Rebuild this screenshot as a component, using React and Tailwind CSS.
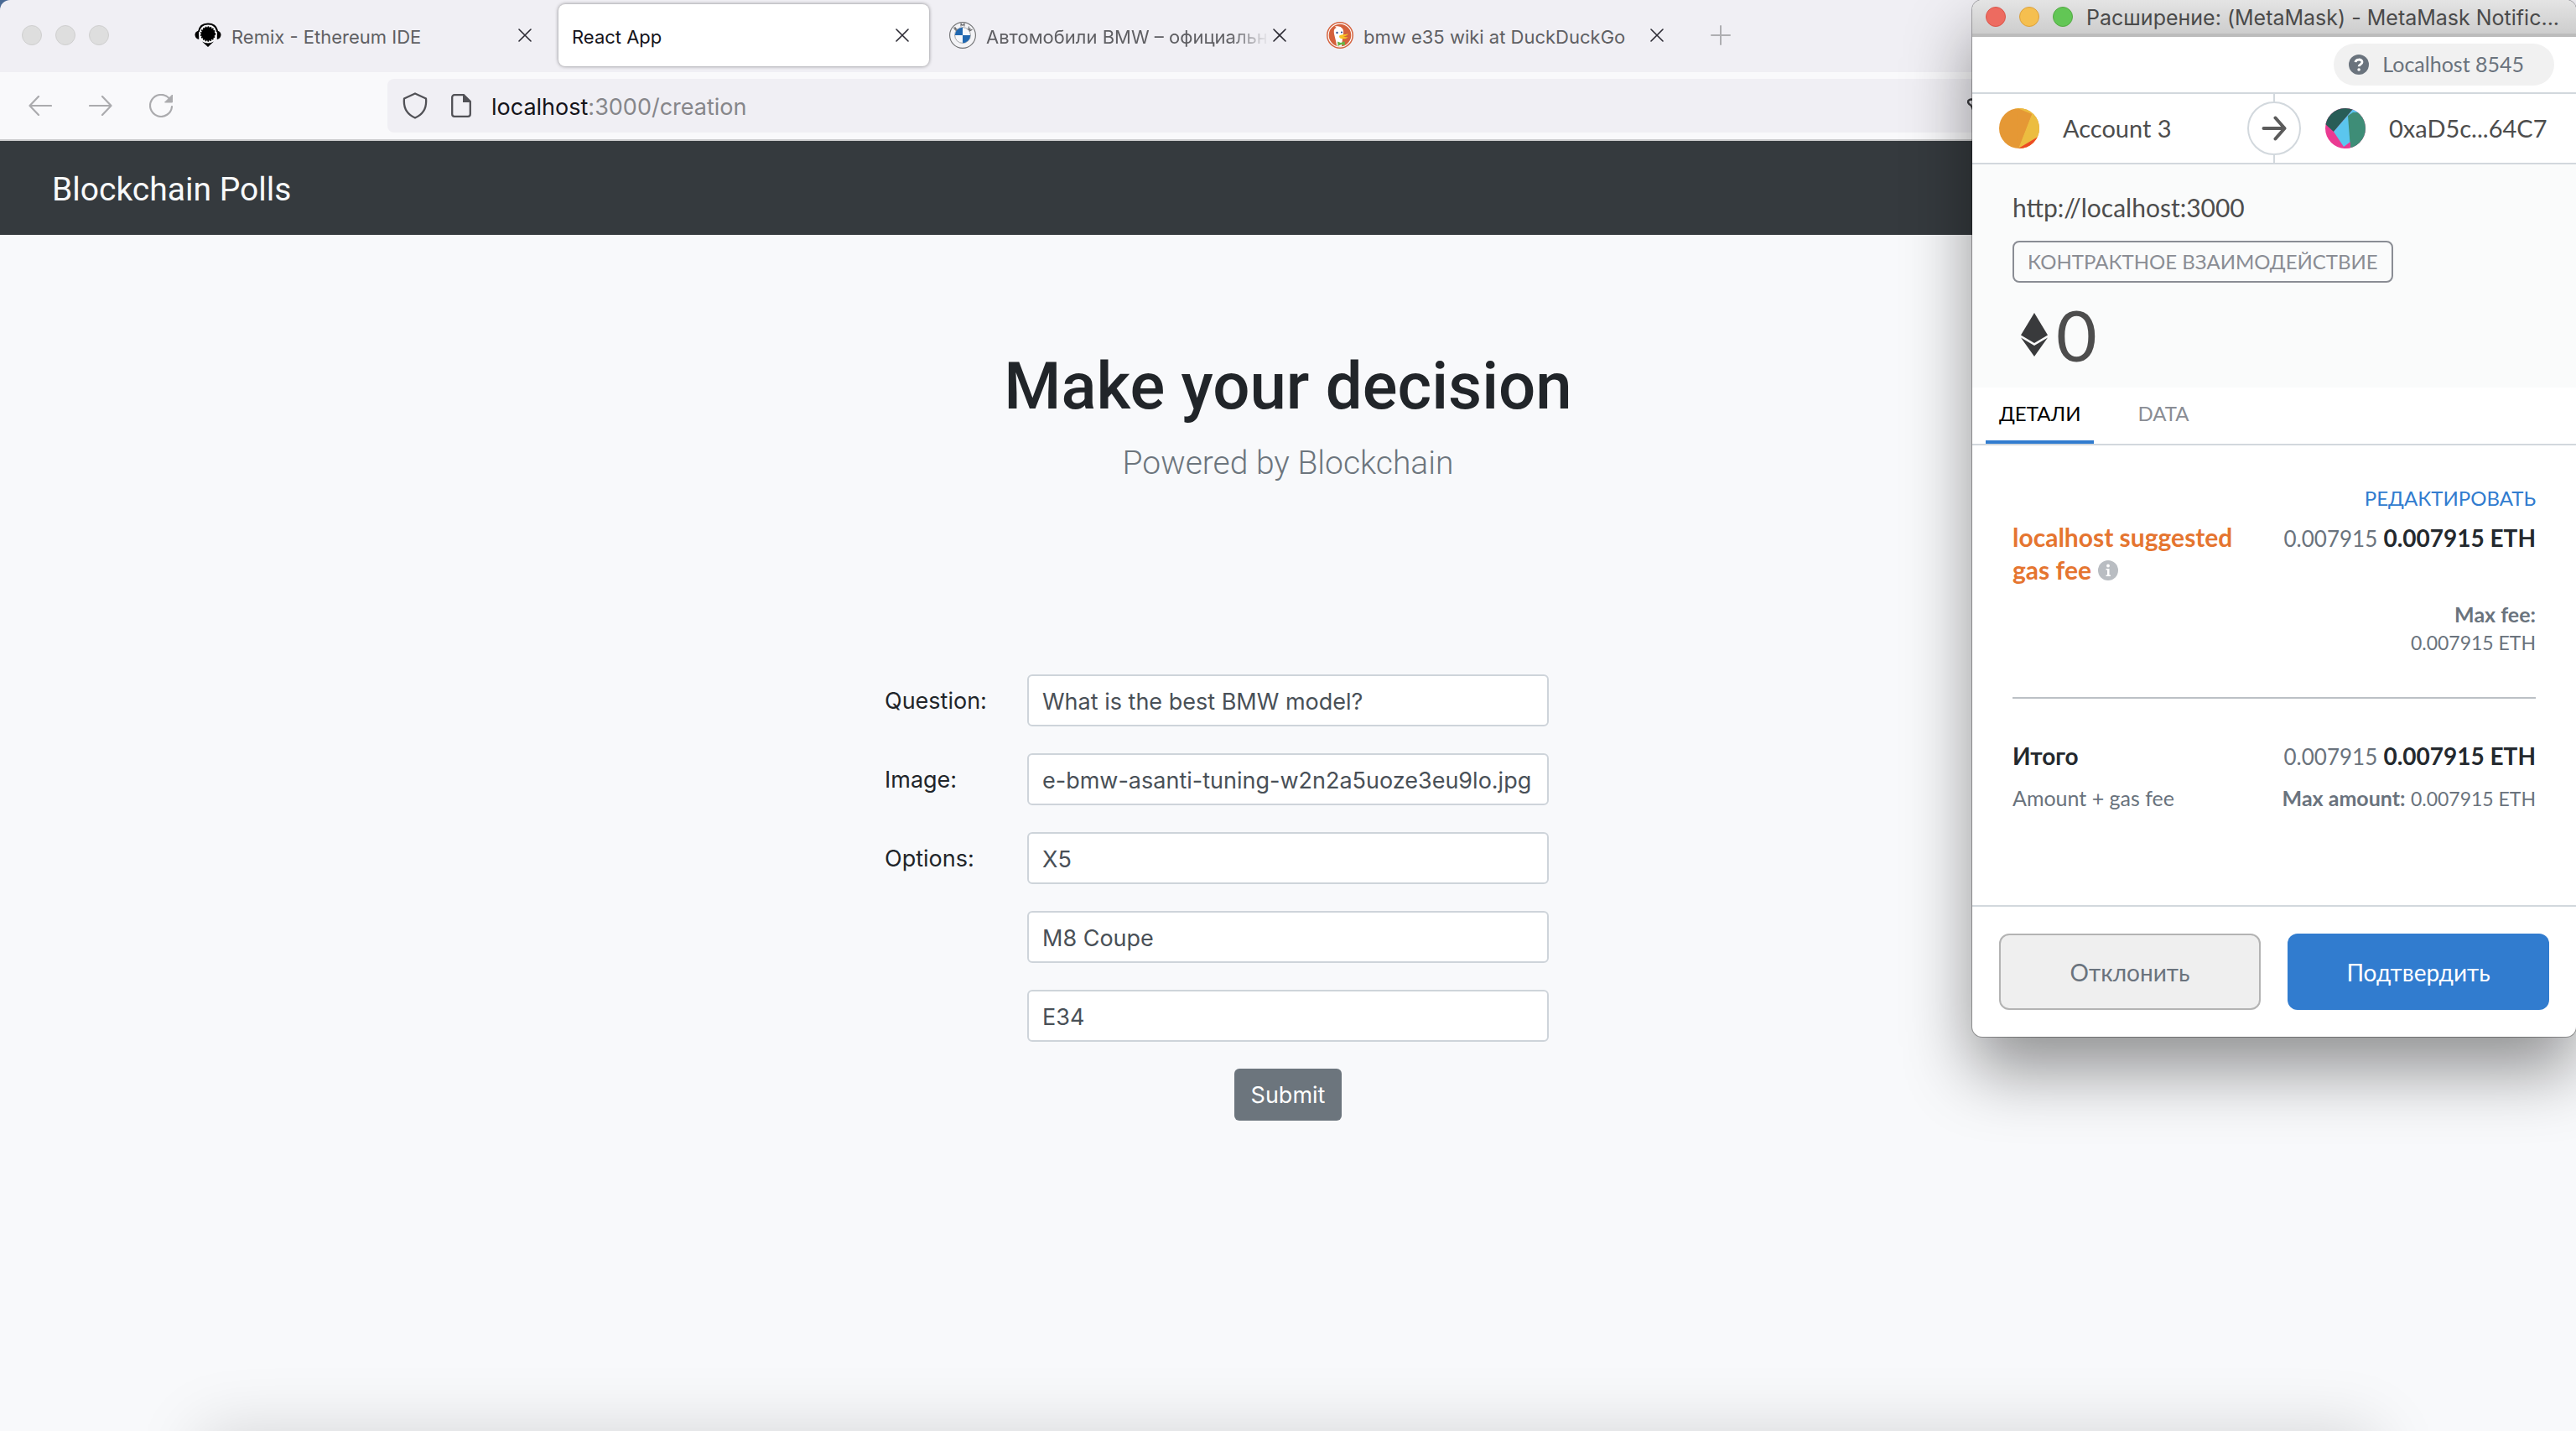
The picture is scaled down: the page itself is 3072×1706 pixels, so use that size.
import React, { useLayoutEffect, useRef } from "react";

/* ---------- icons ---------- */

function RemixIcon() {
  return (
    <svg viewBox="0 0 32 32" className="size-8 shrink-0" aria-hidden="true">
      <path d="M5 12C6 5 11 2.500 16 2.500S26 5 27 12" fill="none" stroke="#000" strokeWidth="2.200" />
      <path d="M5.200 10.500C2 11 .5 13 .5 15.500S2 20.500 5.200 21z" fill="#000" />
      <path d="M26.800 10.500C30 11 31.500 13 31.500 15.500S30 20.500 26.800 21z" fill="#000" />
      <circle cx="16" cy="14.500" r="10.500" fill="#fff" />
      <circle cx="16" cy="14.500" r="8.200" fill="#000" />
      <circle cx="16" cy="14.500" r="8.400" fill="none" stroke="#000" strokeWidth="1.600" strokeDasharray="1.600 1.400" />
      <path d="M9 23.500q7 4 14 0L16 30z" fill="#000" />
    </svg>
  );
}

function BmwIcon() {
  return (
    <svg viewBox="0 0 32 32" className="size-8 shrink-0" aria-hidden="true">
      <circle cx="16" cy="16" r="15.400" fill="#f3f3f6" stroke="#6f7072" strokeWidth="1.100" />
      <circle cx="16" cy="16" r="9.400" fill="#f6f7fa" stroke="#8f9296" strokeWidth=".8" />
      <path d="M16 16V6.800A9.200 9.200 0 0 0 6.800 16zM16 16v9.200a9.200 9.200 0 0 0 9.200-9.200z" fill="#2067b0" />
      <g fill="none" stroke="#6a6b6e" strokeWidth="1.100" strokeLinejoin="round">
        <path d="M14 5.500V2l2 2.500L18 2v3.500" />
        <path d="M5.500 7.500l2.500 3M5.500 7.500c1.500-1.500 3-.3 1.500 1.200 1.700-1.200 3 .5 1 1.800" />
        <path d="M23.500 5.500l-.8 4 2.300-1.500-.5 3 3-2" />
      </g>
    </svg>
  );
}

function DuckIcon() {
  return (
    <svg viewBox="0 0 32 32" className="size-8 shrink-0" aria-hidden="true">
      <circle cx="16" cy="16" r="16" fill="#d4613c" />
      <circle cx="16" cy="16" r="13.900" fill="none" stroke="#fff" strokeWidth="1.200" />
      <path d="M12 28.500C11.500 22 8.500 15 8.800 11.500 9 8 10.500 7.500 12 7c-1-.5-1.500-.8-2-1.500 3-.5 8-.3 9.700 4 1 2.500 0 6-.5 9L18 29.200a14 14 0 0 1-6-.7z" fill="#fff" />
      <path d="M15.500 16.300c2.500-1.600 6-.5 10.500-2-1 2.200-4 2.800-6 3.300 2 .8 3.500.6 5.500.8-2.500 2-7.500 2.600-9.700.8-.8-.7-1-2.100-.3-2.900z" fill="#f7c325" />
      <path d="M13 23.500l4 1.500 4.500-1.800.5 5-4.500-1.200-4 2z" fill="#67b345" />
      <circle cx="12.500" cy="13" r="1.200" fill="#2d4f8e" />
      <circle cx="18" cy="12.500" r="1.100" fill="#2d4f8e" />
    </svg>
  );
}

function CloseIcon() {
  return (
    <svg viewBox="0 0 16 16" className="size-4" fill="none" stroke="#2b2a33" strokeWidth="1.600" strokeLinecap="round" aria-hidden="true">
      <path d="M1 1l14 14M15 1L1 15" />
    </svg>
  );
}

function NavArrow({ flip }) {
  return (
    <svg viewBox="0 0 28 24" className={flip ? "w-7 h-6 rotate-180" : "w-7 h-6"} fill="none" stroke="#ababae" strokeWidth="2.200" strokeLinecap="round" strokeLinejoin="round" aria-hidden="true">
      <path d="M27 12H1.500M12 1L1.500 12 12 23" />
    </svg>
  );
}

function ReloadIcon() {
  return (
    <svg viewBox="0 0 28 28" className="size-7" aria-hidden="true">
      <path d="M27 15A13 13 0 1 1 23.500 5" fill="none" stroke="#ababae" strokeWidth="2.200" strokeLinecap="round" />
      <path d="M27.500 1v9H18.500z" fill="#ababae" stroke="#ababae" strokeLinejoin="round" />
    </svg>
  );
}

function ShieldIcon() {
  return (
    <svg viewBox="0 0 30 32" className="w-[30px] h-8" fill="none" stroke="#515156" strokeWidth="2.300" strokeLinejoin="round" aria-hidden="true">
      <path d="M15 1.500L28 7.500c1 10-2.500 18.500-13 23C4.500 26 1 17.500 2 7.500z" />
    </svg>
  );
}

function PageIcon() {
  return (
    <svg viewBox="0 0 24 28" className="w-6 h-7" aria-hidden="true">
      <path d="M4 1.200h11L22.800 9v15a2.800 2.800 0 0 1-2.800 2.800H4A2.800 2.800 0 0 1 1.200 24V4A2.800 2.800 0 0 1 4 1.200z" fill="none" stroke="#515156" strokeWidth="2.300" />
      <path d="M14 1v9h9z" fill="#515156" />
    </svg>
  );
}

function KeyIcon() {
  return (
    <svg viewBox="0 0 28 28" className="size-7" fill="none" stroke="#3c3c40" strokeWidth="2.400" aria-hidden="true">
      <path d="M5 14C1 12 0 9 2 7.500S7 6 8 8M5 14l3 7M12 8h14v14H12" />
    </svg>
  );
}

function OrangeAvatar() {
  return (
    <svg viewBox="0 0 48 48" className="size-12 shrink-0 rounded-full" aria-hidden="true">
      <path d="M0 0h48v48H0z" fill="#e59835" />
      <path d="M18 0h30v48H23L39 7z" fill="#ecbd40" />
      <path d="M22 0l17 7L23 48" fill="#e59835" />
      <path d="M23 48L48 33v15z" fill="#ec4b25" />
    </svg>
  );
}

function TealAvatar() {
  return (
    <svg viewBox="0 0 48 48" className="size-12 shrink-0 rounded-full" aria-hidden="true">
      <path d="M0 0h48v48H0z" fill="#ea3a92" />
      <path d="M0 0h34L10 28 0 19z" fill="#285d57" />
      <path d="M10 28L34 0l6 4-10 42-8 0z" fill="#5bc6ee" />
      <path d="M27 9l6-4h15v43H30z" fill="#3e8d77" />
      <path d="M22 46l8-6v8h-8z" fill="#ea3a92" />
    </svg>
  );
}

function EthIcon() {
  return (
    <svg viewBox="0 0 32 52" className="w-8 h-[52px] shrink-0" fill="#393a3c" aria-hidden="true">
      <path d="M16 0l16 26.500L16 36 0 26.500z" />
      <path d="M0 29.500L16 39l16-9.500L16 52z" />
    </svg>
  );
}

/* ---------- browser chrome ---------- */

function Tab({ icon, title, active, fade }) {
  return (
    <div
      className={
        active
          ? "mr-2 flex h-[74px] w-[442px] items-center rounded-lg bg-white pl-4 pr-6 shadow-[0_0_4px_rgba(0,0,0,0.45)]"
          : "flex h-[74px] w-[450px] items-center pl-4 pr-8"
      }
    >
      {icon}
      <button
        className={
          (active ? "text-[#15141a] " : "ml-3 text-[#5f5f63] ") +
          "min-w-0 flex-1 overflow-hidden whitespace-nowrap pt-1 text-left text-[22px] leading-8" +
          (fade ? " [mask-image:linear-gradient(to_right,#000_86%,transparent)]" : "")
        }
      >
        {title}
      </button>
      <button aria-label="Close tab" className="ml-1">
        <CloseIcon />
      </button>
    </div>
  );
}

function Browser() {
  return (
    <header>
      <div className="bg-[#4a6a94]">
        <div className="flex h-[86px] items-center rounded-tl-xl bg-[#f0eff4] pb-0.5">
          <div className="flex w-[216px] shrink-0 gap-4 pl-[26px]">
            <span className="size-6 rounded-full border border-[#cfcfcf] bg-[#dedede]" />
            <span className="size-6 rounded-full border border-[#cfcfcf] bg-[#dedede]" />
            <span className="size-6 rounded-full border border-[#cfcfcf] bg-[#dedede]" />
          </div>
          <Tab icon={<RemixIcon />} title="Remix - Ethereum IDE" />
          <Tab title="React App" active />
          <Tab icon={<BmwIcon />} title="Автомобили BMW – официальный" fade />
          <Tab icon={<DuckIcon />} title="bmw e35 wiki at DuckDuckGo" />
          <button aria-label="New tab" className="ml-6">
            <svg viewBox="0 0 24 24" className="size-6" stroke="#aeaeb1" strokeWidth="2" strokeLinecap="round" aria-hidden="true">
              <path d="M12 1v22M1 12h22" />
            </svg>
          </button>
        </div>
      </div>
      <div className="flex h-[82px] items-center border-b-2 border-[#cccccd] bg-[#f9f9fb] pl-[34px]">
        <button aria-label="Back"><NavArrow /></button>
        <button aria-label="Forward" className="ml-11"><NavArrow flip /></button>
        <button aria-label="Reload" className="ml-11"><ReloadIcon /></button>
        <div className="ml-64 mr-[672px] flex h-16 flex-1 items-center rounded-lg bg-[#f0eff4] pl-[18px] pr-[26px]">
          <ShieldIcon />
          <span className="ml-7"><PageIcon /></span>
          <p className="ml-6 flex-1 pt-1 text-[27px] leading-10 text-[#86868a]">
            <span className="text-[#15141a]">localhost</span>:3000/creation
          </p>
          <KeyIcon />
        </div>
      </div>
    </header>
  );
}

/* ---------- page ---------- */

function Field({ id, label, name, value }) {
  const ref = useRef(null);
  useLayoutEffect(() => {
    ref.current.scrollLeft = ref.current.scrollWidth;
  }, []);
  return (
    <>
      {label && (
        <label htmlFor={id} className="col-start-1 pt-0.5 text-[27px] leading-[42px] text-[#212529]">
          {label}
        </label>
      )}
      <input
        id={id}
        ref={ref}
        type="text"
        aria-label={name}
        defaultValue={value}
        className="col-start-2 h-[62px] w-full rounded-md border-2 border-[#ced4da] bg-white px-4 pt-0.5 text-[27px] text-[#495057]"
      />
    </>
  );
}

function Page() {
  return (
    <>
      <nav className="flex h-28 items-center bg-[#353a3e] px-[62px] pt-1">
        <a href="#" className="font-['Roboto',sans-serif] text-[39px] leading-[60px] text-[#f8f9fa]">Blockchain Polls</a>
      </nav>
      <main className="px-8 pt-[133px]">
        <h1 className="text-center font-['Roboto',sans-serif] text-[78px] font-medium leading-[96px] text-[#212529]">
          Make your decision
        </h1>
        <p className="mt-[13px] text-center font-['Roboto',sans-serif] text-[39px] font-light leading-[60px] text-[#6c757d]">
          Powered by Blockchain
        </p>
        <form
          onSubmit={(e) => e.preventDefault()}
          className="mx-auto mt-[222px] grid w-full max-w-[962px] grid-cols-[170px_minmax(0,1fr)_170px] items-center gap-y-8"
        >
          <Field id="question" label="Question:" value="What is the best BMW model?" />
          <Field id="image" label="Image:" value="e-bmw-asanti-tuning-w2n2a5uoze3eu9lo.jpg" />
          <Field id="option-1" label="Options:" value="X5" />
          <Field id="option-2" name="Option 2" value="M8 Coupe" />
          <Field id="option-3" name="Option 3" value="E34" />
          <button type="submit" className="col-start-2 h-[62px] justify-self-center rounded-md bg-[#6c757d] px-5 pt-0.5 text-[27px] text-white">
            Submit
          </button>
        </form>
      </main>
    </>
  );
}

/* ---------- wallet window ---------- */

function Amount() {
  return (
    <p className="whitespace-nowrap text-[28px] leading-10">
      <span className="text-[26px] text-[#6a737d]">0.007915</span>{" "}
      <strong className="font-bold text-[#24292e]">0.007915 ETH</strong>
    </p>
  );
}

function Wallet() {
  return (
    <section
      aria-label="MetaMask Notification"
      className="absolute right-0 top-0 w-[720px] overflow-hidden rounded-xl bg-white font-['Lato',sans-serif] text-[#4d4d4d] shadow-[0_0_0_1px_rgba(0,0,0,0.3),0_40px_80px_rgba(0,0,0,0.42)]"
    >
      <header className="flex h-11 items-center gap-4 border-b-4 border-[#bcbcbc] bg-linear-to-b from-[#e4e4e4] to-[#cdcdcd] pl-4 pr-4">
        <span className="size-6 shrink-0 rounded-full border border-[#d9564b] bg-[#ed6b60]" />
        <span className="size-6 shrink-0 rounded-full border border-[#dba03c] bg-[#f5bf4f]" />
        <span className="size-6 shrink-0 rounded-full border border-[#52a842] bg-[#62c655]" />
        <h2 className="truncate pt-0.5 font-['Inter',sans-serif] text-[25px] leading-9 text-[#4a4a4a]">
          Расширение: (MetaMask) - MetaMask Notific...
        </h2>
      </header>

      <div className="flex justify-end border-b-2 border-[#d2d8dd] py-2 pr-[26px]">
        <div className="flex h-[50px] items-center rounded-full bg-[#f1f1f1] pl-[18px] pr-9 text-[25px] text-[#6a737d]">
          <svg viewBox="0 0 24 24" className="mr-4 size-6" aria-hidden="true">
            <circle cx="12" cy="12" r="12" fill="#6a737d" />
            <path d="M8 9.200C8.300 5 16 5 16 9c0 2.800-3.900 2.800-3.900 5.200" fill="none" stroke="#fff" strokeWidth="2.800" />
            <circle cx="12.100" cy="18" r="1.800" fill="#fff" />
          </svg>
          Localhost 8545
        </div>
      </div>

      <div className="relative grid h-[84px] grid-cols-2 items-center border-b-2 border-[#d2d8dd] text-[29px]">
        <div className="flex items-center gap-7 pl-8">
          <OrangeAvatar />
          Account 3
        </div>
        <div className="flex items-center gap-7 pl-[61px]">
          <TealAvatar />
          0xaD5c...64C7
        </div>
        <div className="absolute inset-y-0 left-1/2 flex w-16 -translate-x-1/2 flex-col items-center">
          <span className="w-0.5 flex-1 bg-[#d2d8dd]" />
          <span className="flex size-16 shrink-0 items-center justify-center rounded-full border-2 border-[#d2d8dd] bg-white">
            <svg viewBox="0 0 30 30" className="size-[30px]" fill="none" stroke="#5b5b5b" strokeWidth="4" strokeLinecap="round" strokeLinejoin="round" aria-hidden="true">
              <path d="M2.500 15h25M16.500 2.500L27.500 15 16.500 27.500" />
            </svg>
          </span>
          <span className="w-0.5 flex-1 bg-[#d2d8dd]" />
        </div>
      </div>

      <div className="h-[266px] bg-[#fafbfb] px-12 pt-[31px]">
        <p className="text-[30px] leading-10">http://localhost:3000</p>
        <div className="mt-5 inline-flex h-[50px] items-center rounded-lg border-2 border-[#8a8d94] px-4 text-[24px] text-[#8a8d94]">
          КОНТРАКТНОЕ ВЗАИМОДЕЙСТВИЕ
        </div>
        <div className="mt-5 flex h-[84px] items-center gap-2.5 pl-2.5 text-[84px] leading-[84px]">
          <EthIcon />
          0
        </div>
      </div>

      <div role="tablist" className="flex gap-9 border-b-2 border-[#d2d8dd] pl-4 text-[24px]">
        <button role="tab" aria-selected="true" className="h-[67px] border-b-4 border-[#317ccf] px-4 pb-0.5 text-black">ДЕТАЛИ</button>
        <button role="tab" aria-selected="false" className="h-[67px] border-b-4 border-transparent px-4 pb-0.5 text-[#8a8d94]">DATA</button>
      </div>

      <div className="px-12 pb-[110px] pt-[46px]">
        <div className="flex justify-end">
          <button className="text-[24px] leading-[34px] text-[#317ccf]">РЕДАКТИРОВАТЬ</button>
        </div>
        <div className="mt-2.5 flex justify-between">
          <p className="w-[290px] text-[30px] font-bold leading-[39px] text-[#e57530]">
            localhost suggested gas fee
            <svg viewBox="0 0 24 24" className="mb-1.5 ml-2 inline size-6" aria-hidden="true">
              <circle cx="12" cy="12" r="12" fill="#b9bdc2" />
              <circle cx="12" cy="6.500" r="1.900" fill="#fff" />
              <path d="M9.500 10h4v7.500h1.500v1.500H9.500v-1.500H11v-6H9.500z" fill="#fff" />
            </svg>
          </p>
          <Amount />
        </div>
        <div className="mt-4 text-right leading-[34px] text-[#6a737d]">
          <p className="text-[25px] font-bold">Max fee:</p>
          <p className="text-[23px]">0.007915 ETH</p>
        </div>
        <hr className="mt-12 border-t-2 border-[#bbc0c5]" />
        <div className="mt-12 flex justify-between">
          <p className="text-[28px] font-bold leading-10 text-[#24292e]">Итого</p>
          <Amount />
        </div>
        <div className="mt-3 flex justify-between text-[25px] leading-[34px] text-[#6a737d]">
          <p>Amount + gas fee</p>
          <p>
            <strong className="font-bold">Max amount:</strong> <span className="text-[23px]">0.007915 ETH</span>
          </p>
        </div>
      </div>

      <footer className="grid grid-cols-2 gap-8 border-t-2 border-[#d2d8dd] p-8 text-[28px]">
        <button className="h-[91px] rounded-xl border-2 border-[#b3b3b3] bg-[#efefef] text-[#6a737d]">Отклонить</button>
        <button className="h-[91px] rounded-xl bg-[#317ccf] text-white">Подтвердить</button>
      </footer>
    </section>
  );
}

export default function App() {
  return (
    <div className="relative min-h-screen overflow-hidden bg-[#f8f9fb] font-['Inter',sans-serif]">
      <Browser />
      <Page />
      <Wallet />
      <div className="pointer-events-none absolute inset-x-[240px] top-full h-24 shadow-[0_0_80px_rgba(0,0,0,0.15)]" />
    </div>
  );
}
